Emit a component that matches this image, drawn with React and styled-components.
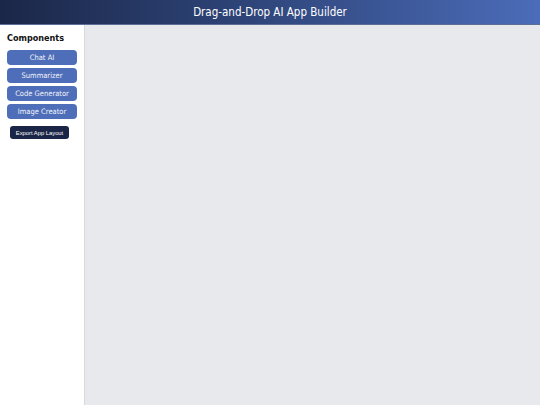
import styled, { createGlobalStyle } from "styled-components";

const GlobalStyle = createGlobalStyle`
  html, body {
    margin: 0;
    padding: 0;
    height: 100%;
  }
  body {
    font-family: "DejaVu Sans Condensed", "DejaVu Sans", Tahoma, sans-serif;
    font-stretch: condensed;
    background: #fff;
  }
  #root {
    height: 100%;
  }
`;

const Page = styled.div`
  display: flex;
  flex-direction: column;
  height: 100vh;
`;

const Header = styled.header`
  height: 25px;
  flex-shrink: 0;
  display: flex;
  align-items: center;
  justify-content: center;
  background: linear-gradient(90deg, #1b2748 0%, #2e4478 45%, #4b6cb9 100%);
  color: #fff;
  font-size: 11.5px;
  border-bottom: 1px solid #5c6f96;
  box-sizing: border-box;
`;

const Body = styled.div`
  flex: 1;
  display: flex;
  min-height: 0;
`;

const Sidebar = styled.aside`
  width: 85px;
  flex-shrink: 0;
  box-sizing: border-box;
  padding: 8px 7px;
  background: #fff;
  border-right: 1px solid #d6d8dc;
  display: flex;
  flex-direction: column;
`;

const Heading = styled.h3`
  margin: 0 0 7px;
  font-size: 9px;
  font-weight: bold;
  color: #111;
`;

const ComponentButton = styled.div`
  width: 70px;
  height: 15px;
  margin-bottom: 3px;
  border-radius: 4px;
  background: #4f6eb9;
  color: #f2f4fa;
  font-size: 7.5px;
  display: flex;
  align-items: center;
  justify-content: center;
  cursor: grab;
`;

const ExportButton = styled.button`
  align-self: flex-start;
  margin: 4px 0 0 3px;
  width: 59px;
  height: 13px;
  padding: 0;
  border: none;
  border-radius: 3px;
  background: #1b2547;
  color: #fff;
  font-family: "Liberation Sans", Arial, sans-serif;
  font-size: 5.8px;
  cursor: pointer;
`;

const Canvas = styled.main`
  flex: 1;
  background: #e8e9ed;
`;

const items = ["Chat AI", "Summarizer", "Code Generator", "Image Creator"];

export default function App() {
  return (
    <>
      <GlobalStyle />
      <Page>
        <Header>Drag-and-Drop AI App Builder</Header>
        <Body>
          <Sidebar>
            <Heading>Components</Heading>
            {items.map((name) => (
              <ComponentButton key={name} draggable>
                {name}
              </ComponentButton>
            ))}
            <ExportButton>Export App Layout</ExportButton>
          </Sidebar>
          <Canvas />
        </Body>
      </Page>
    </>
  );
}
